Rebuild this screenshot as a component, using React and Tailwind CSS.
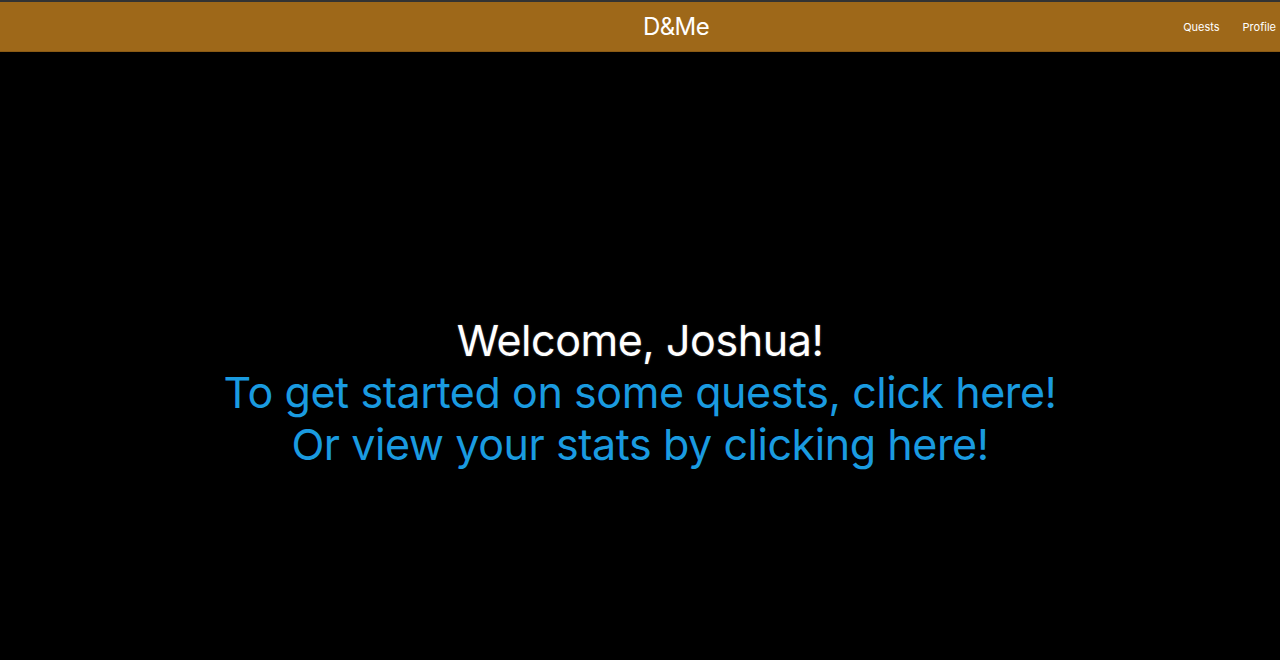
export default function App() {
  return (
    <div className="min-h-[660px] bg-black flex flex-col font-['Inter','Liberation_Sans',sans-serif]">
      {/* Top bar */}
      <header className="relative h-[52px] bg-[#9e6819] border-t-2 border-[#333] border-b border-b-[#8a5a14] flex items-center justify-center">
        <h1 className="ml-[72px] text-[24px] text-white tracking-tight">D&amp;Me</h1>
        <nav className="absolute right-1 top-0 h-full flex items-center gap-[23px] pt-[2px] text-[11px] text-white">
          <a href="#">Quests</a>
          <a href="#">Profile</a>
        </nav>
      </header>

      {/* Welcome */}
      <main className="flex-1 flex flex-col items-center justify-center pt-[80px] pb-[8px] text-[43px] leading-[52px] tracking-[-0.01em] text-center">
        <p className="text-white [text-shadow:0_0_2px_#555]">Welcome, Joshua!</p>
        <p className="text-[#1a9be0]">
          To get started on some quests, <a href="#">click here!</a>
        </p>
        <p className="text-[#1a9be0]">
          Or view your stats by <a href="#">clicking here!</a>
        </p>
      </main>
    </div>
  )
}
